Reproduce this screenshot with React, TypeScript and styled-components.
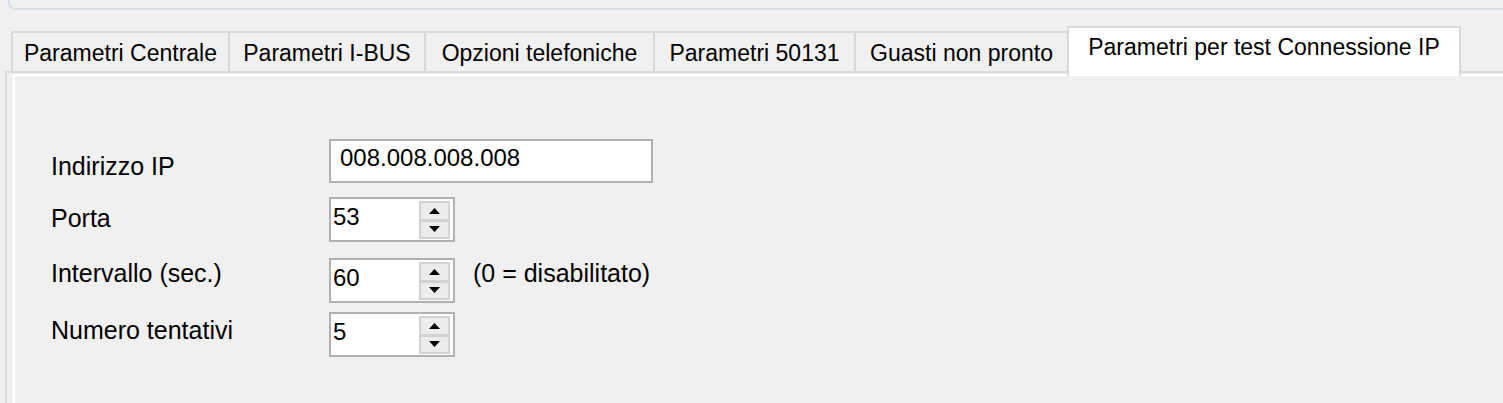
import React from "react";
import styled, { createGlobalStyle } from "styled-components";

const GlobalStyle = createGlobalStyle`
  html, body {
    margin: 0;
    padding: 0;
    background: #f0f0f0;
  }
  body {
    font-family: "Liberation Sans", Arial, sans-serif;
    color: #000;
  }
`;

const Window = styled.div`
  width: 1503px;
  height: 403px;
  overflow: hidden;
  background: #f0f0f0;
  display: flex;
  flex-direction: column;
`;

const TopFrame = styled.div`
  height: 8px;
  margin-left: 8px;
  border-left: 2px solid #d8dee5;
  border-bottom: 2px solid #d8dee5;
  border-bottom-left-radius: 7px;
  flex: none;
`;

const TabControl = styled.div`
  display: flex;
  flex-direction: column;
  flex: 1;
  margin-top: 16px;
`;

const TabRow = styled.div`
  display: flex;
  align-items: flex-start;
  height: 45px;
  padding-left: 11px;
  position: relative;
  z-index: 2;
  flex: none;
`;

const Tab = styled.div<{ $w: number; $active?: boolean }>`
  box-sizing: border-box;
  width: ${(p) => p.$w}px;
  flex: none;
  margin-left: -2px;
  &:first-child {
    margin-left: 0;
  }
  margin-top: ${(p) => (p.$active ? 0 : 5)}px;
  height: ${(p) => (p.$active ? 50 : 40)}px;
  border: 2px solid #d9d9d9;
  border-bottom: none;
  background: ${(p) => (p.$active ? "#ffffff" : "#f0f0f0")};
  position: relative;
  z-index: ${(p) => (p.$active ? 3 : 1)};
  padding-top: ${(p) => (p.$active ? 4 : 5)}px;
  font-size: 23px;
  line-height: 30px;
  text-align: center;
  white-space: nowrap;
`;

const TabPanel = styled.div`
  flex: 1;
  margin-left: 5px;
  border-top: 2px solid #d9d9d9;
  border-left: 2px solid #d9d9d9;
  padding: 1px 0 0 6px;
  display: flex;
`;

const TabPage = styled.div`
  flex: 1;
  border-top: 2px solid #ffffff;
  border-left: 2px solid #ffffff;
  background: #f0f0f0;
`;

const Form = styled.div`
  display: flex;
  flex-direction: column;
  padding: 63px 0 0 36px;
`;

const FieldRow = styled.div<{ $mt: number }>`
  display: flex;
  align-items: flex-start;
  margin-top: ${(p) => p.$mt}px;
`;

const Label = styled.div<{ $offset: number }>`
  width: 278px;
  flex: none;
  margin-top: ${(p) => p.$offset}px;
  font-size: 25px;
  line-height: 30px;
  white-space: nowrap;
`;

const Hint = styled.div<{ $offset: number }>`
  margin-left: 18px;
  margin-top: ${(p) => p.$offset}px;
  font-size: 25px;
  line-height: 30px;
  white-space: nowrap;
`;

const TextBox = styled.div`
  box-sizing: border-box;
  width: 324px;
  height: 44px;
  border: 2px solid #b0b0b0;
  background: #ffffff;
  padding: 1px 0 0 9px;
  font-size: 24px;
  line-height: 32px;
  white-space: nowrap;
`;

const SpinBox = styled.div`
  box-sizing: border-box;
  width: 126px;
  height: 45px;
  border: 2px solid #b0b0b0;
  background: #ffffff;
  display: flex;
`;

const SpinValue = styled.div`
  flex: 1;
  padding: 2px 0 0 2px;
  font-size: 24px;
  line-height: 32px;
  white-space: nowrap;
`;

const SpinColumn = styled.div`
  width: 36px;
  flex: none;
  box-sizing: border-box;
  padding: 2px 3px 1px 2px;
  display: flex;
  flex-direction: column;
`;

const SpinButton = styled.div`
  flex: 1;
  box-sizing: border-box;
  border: 2px solid #d2d2d2;
  background: #ececec;
  display: flex;
  align-items: center;
  justify-content: center;
  & + & {
    margin-top: -1px;
  }
`;

const Arrow = ({ down }: { down?: boolean }) => (
  <svg width="11" height="6" viewBox="0 0 11 6">
    <polygon points={down ? "0,0 11,0 5.5,6" : "0,6 11,6 5.5,0"} fill="#000" />
  </svg>
);

const Spinner = ({ value }: { value: string }) => (
  <SpinBox>
    <SpinValue>{value}</SpinValue>
    <SpinColumn>
      <SpinButton>
        <Arrow />
      </SpinButton>
      <SpinButton>
        <Arrow down />
      </SpinButton>
    </SpinColumn>
  </SpinBox>
);

const tabs = [
  { label: "Parametri Centrale", w: 219 },
  { label: "Parametri I-BUS", w: 198 },
  { label: "Opzioni telefoniche", w: 231 },
  { label: "Parametri 50131", w: 203 },
  { label: "Guasti non pronto", w: 215 },
  { label: "Parametri per test Connessione IP", w: 394, active: true },
];

export default function App() {
  return (
    <>
      <GlobalStyle />
      <Window>
        <TopFrame />
        <TabControl>
          <TabRow>
            {tabs.map((t) => (
              <Tab key={t.label} $w={t.w} $active={t.active}>
                {t.label}
              </Tab>
            ))}
          </TabRow>
          <TabPanel>
            <TabPage>
              <Form>
                <FieldRow $mt={0}>
                  <Label $offset={12}>Indirizzo IP</Label>
                  <TextBox>008.008.008.008</TextBox>
                </FieldRow>
                <FieldRow $mt={14}>
                  <Label $offset={6}>Porta</Label>
                  <Spinner value="53" />
                </FieldRow>
                <FieldRow $mt={16}>
                  <Label $offset={0}>Intervallo (sec.)</Label>
                  <Spinner value="60" />
                  <Hint $offset={0}>(0 = disabilitato)</Hint>
                </FieldRow>
                <FieldRow $mt={9}>
                  <Label $offset={3}>Numero tentativi</Label>
                  <Spinner value="5" />
                </FieldRow>
              </Form>
            </TabPage>
          </TabPanel>
        </TabControl>
      </Window>
    </>
  );
}
